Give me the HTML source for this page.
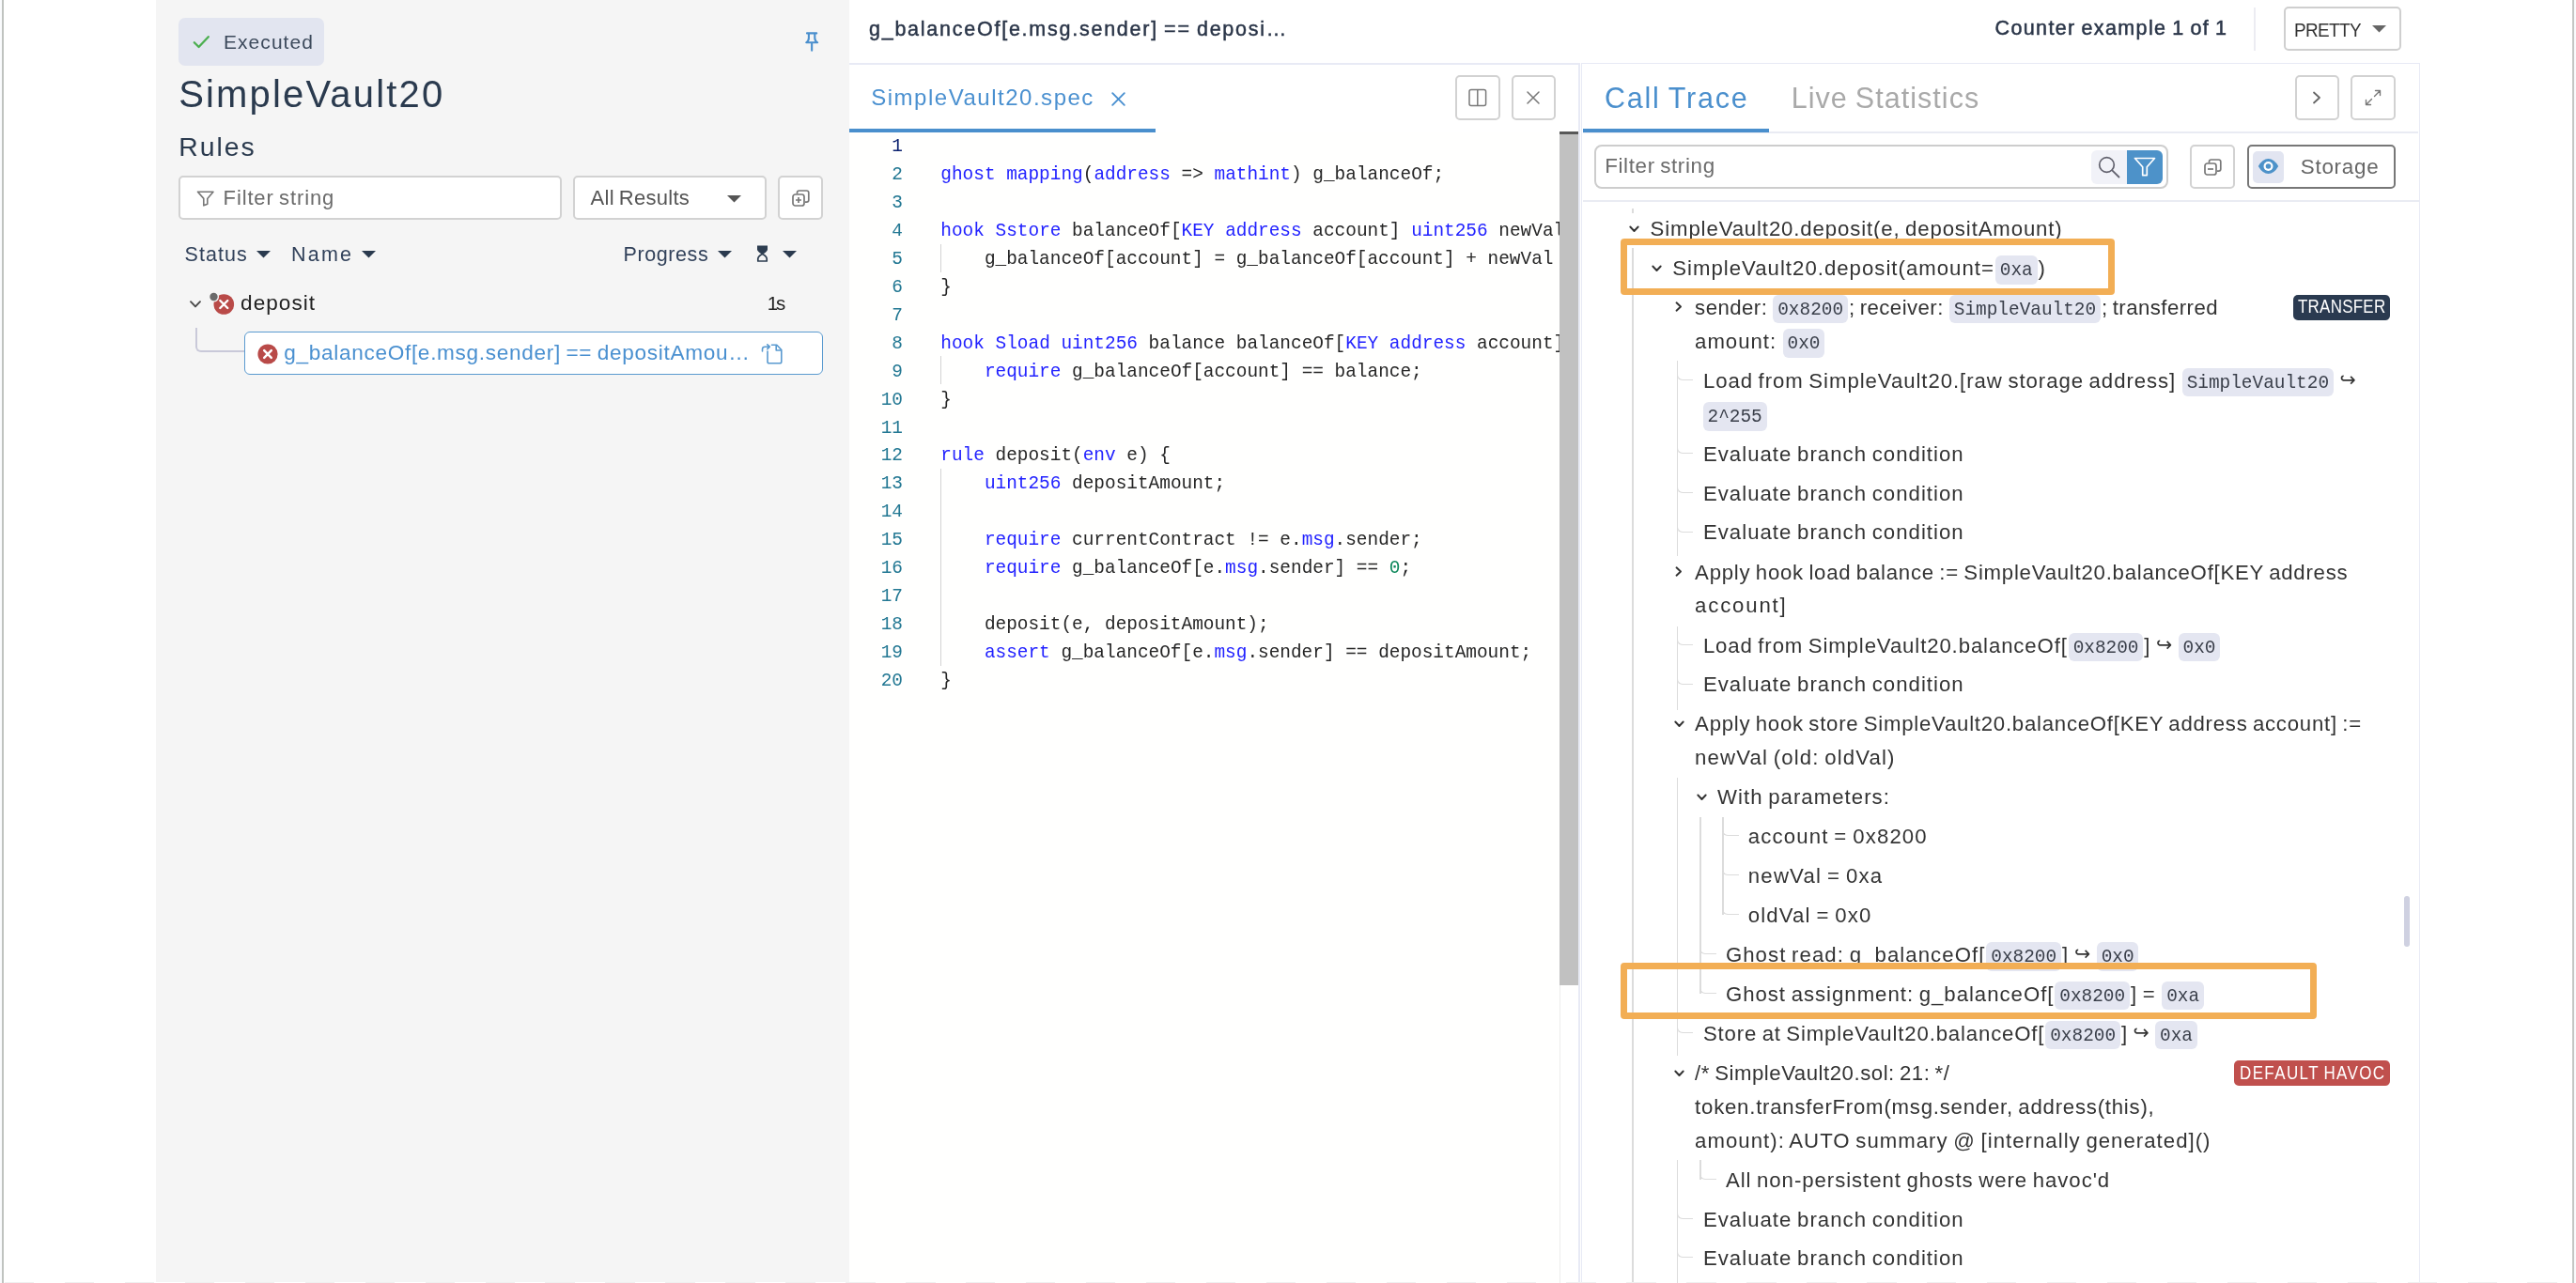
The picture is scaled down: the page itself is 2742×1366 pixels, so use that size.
<!DOCTYPE html>
<html lang="en"><head><meta charset="utf-8"><title>SimpleVault20 - Rules</title>
<style>

html,body{margin:0;padding:0;background:#fff;}
body{width:2742px;height:1366px;position:relative;overflow:hidden;will-change:transform;font-family:"Liberation Sans",sans-serif;color:#2a3a4e;word-spacing:-1.5px;}
.t{position:absolute;white-space:nowrap;}
.a{position:absolute;}
.b{position:absolute;box-sizing:border-box;}
svg{position:absolute;overflow:visible;}
.btn{position:absolute;box-sizing:border-box;border:2px solid #cfcfcf;border-radius:5px;background:#fff;}
.c{font-family:"Liberation Mono",monospace;font-size:19.41px;letter-spacing:0;background:#e4e6f1;color:#3a3f4a;border-radius:6px;padding:5px 4.85px 3.6px 4.85px;margin:0 1px;word-spacing:0;}
.row{position:absolute;white-space:nowrap;font-size:22.2px;line-height:30px;color:#333;}
.row .ar{font-family:"DejaVu Sans",sans-serif;font-size:20.5px;letter-spacing:0;position:relative;top:-2px;}
.gl{position:absolute;background:#dcdcdc;}
.tk{position:absolute;box-sizing:border-box;border-left:1.6px solid #dcdcdc;border-bottom:1.6px solid #dcdcdc;border-bottom-left-radius:6px;}
.code{position:absolute;white-space:pre;word-spacing:0;font-family:"Liberation Mono",monospace;font-size:19.41px;line-height:30px;color:#262626;left:1001.3px;}
.ln{position:absolute;white-space:pre;font-family:"Liberation Mono",monospace;font-size:19.41px;line-height:30px;color:#237893;text-align:right;left:900px;width:61px;}
.k{color:#2222ff;}
.n{color:#098658;}
.ob{position:absolute;box-sizing:border-box;border:7.2px solid #f2ae55;border-radius:4px;z-index:5;}

</style></head>
<body>
<div class="a" style="left:0;top:0;width:2px;height:1366px;background:#fafbfd"></div>
<div class="a" style="left:2px;top:0;width:2px;height:1366px;background:#c0c3c0"></div>
<div class="a" style="left:2738px;top:0;width:2.1px;height:1366px;background:#c4c6c4"></div>
<div class="a" style="left:2740.1px;top:0;width:1.9px;height:1366px;background:#fafbfd"></div>
<div class="a" id="leftpanel" style="left:166px;top:0;width:738px;height:1365px;background:#f5f5f5"></div>
<div class="a" style="left:190px;top:19px;width:155px;height:50.5px;background:#e2e5f0;border-radius:7px"></div>
<svg style="left:205px;top:37px" width="19" height="15" viewBox="0 0 19 15"><path d="M1.8 8.2 L6.6 13 L16.8 2.2" fill="none" stroke="#4caf50" stroke-width="2.3" stroke-linecap="round" stroke-linejoin="round"></path></svg>
<span class="t" style="top: 30.9px; font-size: 21px; line-height: 27px; color: rgb(61, 74, 92); font-weight: 400; left: 238px; letter-spacing: 1.05px;">Executed</span>
<svg style="left:856px;top:33px" width="16" height="22" viewBox="0 0 16 22"><path d="M3 2.4 H13.2 M4.9 2.6 V7.6 Q4.9 10.6 2.2 12.3 H14.2 Q11.3 10.6 11.3 7.6 V2.6 M8.15 12.5 V20.7" fill="none" stroke="#4a8fcd" stroke-width="2.1" stroke-linecap="round" stroke-linejoin="round"></path></svg>
<span class="t" style="top: 74.3px; font-size: 40px; line-height: 52px; color: rgb(42, 58, 78); font-weight: 400; left: 190.2px; letter-spacing: 2.17px;">SimpleVault20</span>
<span class="t" style="top: 138.4px; font-size: 28.4px; line-height: 37px; color: rgb(42, 58, 78); font-weight: 400; left: 190.3px; letter-spacing: 1.96px;">Rules</span>
<div class="btn" style="left:190.2px;top:186.6px;width:407.8px;height:47.6px;border-color:#d2d2d2;border-width:2px"></div>
<svg style="left:209px;top:203px" width="20" height="17" viewBox="0 0 20 17"><path d="M1.5 1.2 H18 L11.8 8.4 V14.2 L7.8 15.8 V8.4 Z" fill="none" stroke="#777" stroke-width="1.6" stroke-linejoin="round"></path></svg>
<span class="t" style="top: 195.5px; font-size: 22px; line-height: 29px; color: rgb(107, 107, 107); font-weight: 400; left: 237.6px; letter-spacing: 0.86px;">Filter string</span>
<div class="btn" style="left:610.3px;top:186.6px;width:206px;height:47.6px;border-color:#d2d2d2;border-width:2px"></div>
<span class="t" style="top: 195.5px; font-size: 22px; line-height: 29px; color: rgb(85, 85, 85); font-weight: 400; left: 628.5px; letter-spacing: 0.29px;">All Results</span>
<svg style="left:773.5px;top:207.5px" width="15" height="8" viewBox="0 0 15 8"><path d="M0 0 H15 L7.5 7.5 Z" fill="#555"></path></svg>
<div class="btn" style="left:828.3px;top:186.6px;width:48px;height:47.6px;border-color:#d2d2d2;border-width:2px"></div>
<svg style="left:843px;top:202px" width="19" height="18" viewBox="0 0 19 18"><rect x="1" y="5" width="12" height="12" rx="2.5" fill="none" stroke="#777" stroke-width="1.7"></rect><path d="M5.5 4.5 V3.2 Q5.5 1 7.7 1 H15.5 Q17.8 1 17.8 3.2 V11 Q17.8 13.2 15.5 13.2 H14" fill="none" stroke="#777" stroke-width="1.7"></path><path d="M7 8 V14 M4 11 H10" stroke="#777" stroke-width="1.7"></path></svg>
<span class="t" style="top: 256.6px; font-size: 21.5px; line-height: 28px; color: rgb(49, 65, 90); font-weight: 400; left: 196.5px; letter-spacing: 1.08px;">Status</span>
<svg style="left:273px;top:267.2px" width="15" height="8" viewBox="0 0 15 8"><path d="M0 0 H15 L7.5 7.5 Z" fill="#2a3a4e"></path></svg>
<span class="t" style="top: 256.6px; font-size: 21.5px; line-height: 28px; color: rgb(49, 65, 90); font-weight: 400; left: 310px; letter-spacing: 2.23px;">Name</span>
<svg style="left:384.5px;top:267.2px" width="15" height="8" viewBox="0 0 15 8"><path d="M0 0 H15 L7.5 7.5 Z" fill="#2a3a4e"></path></svg>
<span class="t" style="top: 256.6px; font-size: 21.5px; line-height: 28px; color: rgb(49, 65, 90); font-weight: 400; left: 663.5px; letter-spacing: 0.59px;">Progress</span>
<svg style="left:764px;top:267.2px" width="15" height="8" viewBox="0 0 15 8"><path d="M0 0 H15 L7.5 7.5 Z" fill="#2a3a4e"></path></svg>
<svg style="left:805px;top:262px" width="13" height="17" viewBox="0 0 13 17"><path d="M1 -0.6 H12 V3.4 Q12 6 6.5 8.6 Q1 6 1 3.4 Z" fill="#2d3d50"></path><path d="M6.5 8.4 Q11.2 10.8 11.2 13.4 V16 H1.8 V13.4 Q1.8 10.8 6.5 8.4 Z" fill="none" stroke="#2d3d50" stroke-width="1.7" stroke-linejoin="round"></path></svg>
<svg style="left:832.5px;top:267.2px" width="15" height="8" viewBox="0 0 15 8"><path d="M0 0 H15 L7.5 7.5 Z" fill="#2a3a4e"></path></svg>
<svg style="left:202.3px;top:320px" width="12" height="8" viewBox="0 0 12 8"><path d="M1 1.2 L6 6.4 L11 1.2" fill="none" stroke="#4a4a4a" stroke-width="1.9" stroke-linecap="round" stroke-linejoin="round"></path></svg>
<svg style="left:222px;top:310px" width="28" height="26" viewBox="0 0 28 26"><circle cx="16.3" cy="14" r="10.8" fill="#b94a48"></circle><path d="M12.3 10 L20.3 18 M20.3 10 L12.3 18" stroke="#fff" stroke-width="2.4" stroke-linecap="round"></path><circle cx="5.5" cy="6" r="5.6" fill="#f5f5f5"></circle><circle cx="5.5" cy="6" r="4.2" fill="#6a6a6a"></circle></svg>
<span class="t" style="top: 308.3px; font-size: 22.6px; line-height: 29px; color: rgb(34, 34, 34); font-weight: 400; left: 256.1px; letter-spacing: 1.02px;">deposit</span>
<span class="t" style="left:816.8px;top:309.2px;font-size:20.5px;line-height:27px;color:#222;font-weight:400;letter-spacing:-2.2px;">1s</span>
<div class="b" style="left:208px;top:348.5px;width:54px;height:26.5px;border-left:2px solid #c9c9d9;border-bottom:2px solid #c9c9d9;border-bottom-left-radius:6px"></div>
<div class="b" style="left:260.3px;top:352.9px;width:615.7px;height:45.8px;border:1.8px solid #5b9bd0;border-radius:6px;background:#fff"></div>
<svg style="left:274px;top:366px" width="22" height="22" viewBox="0 0 22 22"><circle cx="11" cy="11" r="10.6" fill="#b94a48"></circle><path d="M7.2 7.2 L14.8 14.8 M14.8 7.2 L7.2 14.8" stroke="#fff" stroke-width="2.5" stroke-linecap="round"></path></svg>
<span class="t" style="top: 360.9px; font-size: 22.6px; line-height: 29px; color: rgb(74, 144, 208); font-weight: 400; left: 302.2px; letter-spacing: 0.69px;">g_balanceOf[e.msg.sender] == depositAmou…</span>
<svg style="left:810px;top:365px" width="24" height="24" viewBox="0 0 24 24"><path d="M7 9 V20 Q7 21.8 8.8 21.8 H20 Q21.8 21.8 21.8 20 V7.5 L16.8 2.2 H11.5" fill="none" stroke="#5a9ad0" stroke-width="1.6" stroke-linejoin="round" stroke-linecap="round"></path><path d="M16.2 2.5 V8 H21.5" fill="none" stroke="#5a9ad0" stroke-width="1.6" stroke-linejoin="round"></path><path d="M1.5 9 V6.8 Q1.5 4.2 4.2 4.2 H9 M6.8 1.8 L9.3 4.2 L6.8 6.6" fill="none" stroke="#5a9ad0" stroke-width="1.6" stroke-linejoin="round" stroke-linecap="round"></path></svg>
<span class="t" style="top: 17px; font-size: 21.5px; line-height: 28px; color: rgb(42, 53, 72); font-weight: 400; -webkit-text-stroke: 0.45px rgb(42, 53, 72); left: 925px; letter-spacing: 1.75px;">g_balanceOf[e.msg.sender] == deposi…</span>
<span class="t" style="top: 15.5px; font-size: 21.5px; line-height: 28px; color: rgb(42, 53, 72); font-weight: 400; -webkit-text-stroke: 0.5px rgb(42, 53, 72); left: 2123.5px; letter-spacing: 1.38px;">Counter example 1 of 1</span>
<div class="a" style="left:2399px;top:8px;width:2px;height:46px;background:#ececf2"></div>
<div class="btn" style="left:2430.8px;top:7.3px;width:125.4px;height:47px;border-color:#cfcfcf"></div>
<span class="t" style="top: 18.2px; font-size: 21px; line-height: 27px; color: rgb(51, 51, 51); font-weight: 400; transform: scaleX(0.9); transform-origin: 0px 0px; left: 2442.2px; letter-spacing: -0.67px;">PRETTY</span>
<svg style="left:2525px;top:26.5px" width="15" height="8" viewBox="0 0 15 8"><path d="M0 0 H15 L7.5 7.5 Z" fill="#666"></path></svg>
<div class="a" style="left:904px;top:67px;width:777.6px;height:1.7px;background:#e8eaf5"></div>
<div class="a" style="left:1680.1px;top:67px;width:1.5px;height:1300px;background:#e8eaf5"></div>
<span class="t" style="top: 88.4px; font-size: 24px; line-height: 31px; color: rgb(74, 144, 208); font-weight: 400; left: 927.2px; letter-spacing: 1.52px;">SimpleVault20.spec</span>
<svg style="left:1183px;top:97.5px" width="15" height="15" viewBox="0 0 15 15"><path d="M1.2 1.2 L13.8 13.8 M13.8 1.2 L1.2 13.8" stroke="#4a90d0" stroke-width="1.9" stroke-linecap="round"></path></svg>
<div class="a" style="left:904px;top:137.1px;width:326px;height:3.5px;background:#4a8fcd;z-index:3"></div>
<div class="btn" style="left:1549px;top:80.3px;width:47.5px;height:47.8px;border-color:#d2d2d2"></div>
<svg style="left:1563px;top:95px" width="20" height="18" viewBox="0 0 20 18"><rect x="1" y="0.6" width="17.6" height="16.8" rx="2" fill="none" stroke="#7a7a7a" stroke-width="1.5"></rect><path d="M9.8 0.6 V17.4" stroke="#7a7a7a" stroke-width="1.5"></path></svg>
<div class="btn" style="left:1608.5px;top:80.3px;width:47.5px;height:47.8px;border-color:#d2d2d2"></div>
<svg style="left:1625px;top:97px" width="14" height="14" viewBox="0 0 14 14"><path d="M1 1 L13 13 M13 1 L1 13" stroke="#777" stroke-width="1.5" stroke-linecap="round"></path></svg>
<div class="b" style="left:1000.8px;top:140.5px;width:660px;height:29px;border:2.2px solid #eeeeee;border-right:0"></div>
<div class="a" style="left:1659.5px;top:140.3px;width:1px;height:1230px;background:#ececec"></div>
<div class="a" style="left:1659.5px;top:140.3px;width:20.8px;height:908.6px;background:#c1c1c1"></div>
<div class="a" style="left:1659.5px;top:140.3px;width:20.8px;height:3px;background:#585858"></div>
<div class="a" id="codeclip" style="left:900px;top:141px;width:759.5px;height:1225px;overflow:hidden"><div class="a" style="left:4px;top:0;width:756px;height:1225px;background:#fffffe"></div>
<div class="ln" style="left:0;top:0.2px;color:#0b216f">1</div>
<div class="ln" style="left:0;top:30.1px;color:#237893">2</div>
<div class="code" style="left:101.3px;top:30.1px"><span class="k">ghost</span> <span class="k">mapping</span>(<span class="k">address</span> =&gt; <span class="k">mathint</span>) g_balanceOf;</div>
<div class="ln" style="left:0;top:60.1px;color:#237893">3</div>
<div class="ln" style="left:0;top:90.0px;color:#237893">4</div>
<div class="code" style="left:101.3px;top:90.0px"><span class="k">hook</span> <span class="k">Sstore</span> balanceOf[<span class="k">KEY</span> <span class="k">address</span> account] <span class="k">uint256</span> newVal</div>
<div class="ln" style="left:0;top:119.9px;color:#237893">5</div>
<div class="code" style="left:101.3px;top:119.9px">    g_balanceOf[account] = g_balanceOf[account] + newVal</div>
<div class="ln" style="left:0;top:149.9px;color:#237893">6</div>
<div class="code" style="left:101.3px;top:149.9px">}</div>
<div class="ln" style="left:0;top:179.8px;color:#237893">7</div>
<div class="ln" style="left:0;top:209.7px;color:#237893">8</div>
<div class="code" style="left:101.3px;top:209.7px"><span class="k">hook</span> <span class="k">Sload</span> <span class="k">uint256</span> balance balanceOf[<span class="k">KEY</span> <span class="k">address</span> account]</div>
<div class="ln" style="left:0;top:239.6px;color:#237893">9</div>
<div class="code" style="left:101.3px;top:239.6px">    <span class="k">require</span> g_balanceOf[account] == balance;</div>
<div class="ln" style="left:0;top:269.6px;color:#237893">10</div>
<div class="code" style="left:101.3px;top:269.6px">}</div>
<div class="ln" style="left:0;top:299.5px;color:#237893">11</div>
<div class="ln" style="left:0;top:329.4px;color:#237893">12</div>
<div class="code" style="left:101.3px;top:329.4px"><span class="k">rule</span> deposit(<span class="k">env</span> e) {</div>
<div class="ln" style="left:0;top:359.4px;color:#237893">13</div>
<div class="code" style="left:101.3px;top:359.4px">    <span class="k">uint256</span> depositAmount;</div>
<div class="ln" style="left:0;top:389.3px;color:#237893">14</div>
<div class="ln" style="left:0;top:419.2px;color:#237893">15</div>
<div class="code" style="left:101.3px;top:419.2px">    <span class="k">require</span> currentContract != e.<span class="k">msg</span>.sender;</div>
<div class="ln" style="left:0;top:449.1px;color:#237893">16</div>
<div class="code" style="left:101.3px;top:449.1px">    <span class="k">require</span> g_balanceOf[e.<span class="k">msg</span>.sender] == <span class="n">0</span>;</div>
<div class="ln" style="left:0;top:479.1px;color:#237893">17</div>
<div class="ln" style="left:0;top:509.0px;color:#237893">18</div>
<div class="code" style="left:101.3px;top:509.0px">    deposit(e, depositAmount);</div>
<div class="ln" style="left:0;top:538.9px;color:#237893">19</div>
<div class="code" style="left:101.3px;top:538.9px">    <span class="k">assert</span> g_balanceOf[e.<span class="k">msg</span>.sender] == depositAmount;</div>
<div class="ln" style="left:0;top:568.9px;color:#237893">20</div>
<div class="code" style="left:101.3px;top:568.9px">}</div>
<div class="a" style="left:100.9px;top:118.7px;width:1.2px;height:30.0px;background:#d3d3d3"></div>
<div class="a" style="left:100.9px;top:238.4px;width:1.2px;height:30.0px;background:#d3d3d3"></div>
<div class="a" style="left:100.9px;top:358.2px;width:1.2px;height:209.6px;background:#d3d3d3"></div>
</div>
<div class="b" style="left:1683.4px;top:67px;width:893px;height:1310px;border:1.7px solid #e8eaf5;"></div>
<span class="t" style="top: 84px; font-size: 30.5px; line-height: 40px; color: rgb(74, 143, 205); font-weight: 400; left: 1707.9px; letter-spacing: 1.79px;">Call Trace</span>
<span class="t" style="top: 84px; font-size: 30.5px; line-height: 40px; color: rgb(169, 169, 169); font-weight: 400; left: 1906.7px; letter-spacing: 1.04px;">Live Statistics</span>
<div class="a" style="left:1685px;top:140px;width:889px;height:2px;background:#e9ebf3"></div>
<div class="a" style="left:1685px;top:137.1px;width:198px;height:3.5px;background:#4a8fcd"></div>
<div class="btn" style="left:2442.6px;top:80.3px;width:47.4px;height:47.8px;border-color:#d2d2d2"></div>
<svg style="left:2461px;top:97px" width="10" height="14" viewBox="0 0 10 14"><path d="M2 1.5 L8 7 L2 12.5" fill="none" stroke="#666" stroke-width="1.8" stroke-linecap="round" stroke-linejoin="round"></path></svg>
<div class="btn" style="left:2502.4px;top:80.3px;width:47.4px;height:47.8px;border-color:#d2d2d2"></div>
<svg style="left:2517px;top:95px" width="18" height="18" viewBox="0 0 18 18"><path d="M10.5 7.5 L16.5 1.5 M11.5 1.5 H16.5 V6.5 M7.5 10.5 L1.5 16.5 M1.5 11.5 V16.5 H6.5" fill="none" stroke="#777" stroke-width="1.4" stroke-linecap="round" stroke-linejoin="round"></path></svg>
<div class="btn" style="left:1696.8px;top:153.6px;width:610.8px;height:47.8px;border-color:#cdcdcd;border-radius:8px"></div>
<span class="t" style="top: 162.2px; font-size: 22.4px; line-height: 29px; color: rgb(107, 107, 107); font-weight: 400; left: 1708.2px; letter-spacing: 0.64px;">Filter string</span>
<div class="a" style="left:2226px;top:159.5px;width:38px;height:36.5px;background:#f1f2f8;border-radius:6px 0 0 6px"></div>
<svg style="left:2233px;top:166px" width="24" height="24" viewBox="0 0 24 24"><circle cx="9.5" cy="9.5" r="7.8" fill="none" stroke="#62626e" stroke-width="1.7"></circle><path d="M15.3 15.3 L22.5 22.5" stroke="#62626e" stroke-width="1.8" stroke-linecap="round"></path></svg>
<div class="a" style="left:2264px;top:159.5px;width:37.5px;height:36.5px;background:#4d92c9;border-radius:0 6px 6px 0"></div>
<svg style="left:2271px;top:167px" width="24" height="22" viewBox="0 0 24 22"><path d="M1.5 1.5 H22.5 L14.3 10.8 V19.6 H9.7 V10.8 Z" fill="none" stroke="#fff" stroke-width="1.7" stroke-linejoin="round"></path></svg>
<div class="btn" style="left:2331.3px;top:153.6px;width:47.7px;height:47.8px;border-color:#d2d2d2"></div>
<svg style="left:2346px;top:169px" width="19" height="18" viewBox="0 0 19 18"><rect x="1" y="5" width="12" height="12" rx="2.5" fill="none" stroke="#777" stroke-width="1.7"></rect><path d="M5.5 4.5 V3.2 Q5.5 1 7.7 1 H15.5 Q17.8 1 17.8 3.2 V11 Q17.8 13.2 15.5 13.2 H14" fill="none" stroke="#777" stroke-width="1.7"></path><path d="M4 11 H10" stroke="#777" stroke-width="1.7"></path></svg>
<div class="btn" style="left:2391.5px;top:153.6px;width:158.7px;height:47.8px;border-color:#777;border-width:2px;border-radius:5px"></div>
<div class="a" style="left:2398px;top:160.5px;width:33px;height:34.5px;background:#e2e5f1;border-radius:5px"></div>
<svg style="left:2403px;top:168px" width="23" height="18" viewBox="0 0 23 18"><path d="M0.8 9 Q5.5 1 11.5 1 Q17.5 1 22.2 9 Q17.5 17 11.5 17 Q5.5 17 0.8 9 Z" fill="#4d92c9"></path><circle cx="11.5" cy="9" r="5" fill="#fff"></circle><circle cx="11.5" cy="9" r="2.8" fill="#4d92c9"></circle></svg>
<span class="t" style="top: 162.6px; font-size: 22.4px; line-height: 29px; color: rgb(102, 102, 102); font-weight: 400; left: 2448.8px; letter-spacing: 0.74px;">Storage</span>
<div class="a" style="left:1685px;top:212.9px;width:889.6px;height:2px;background:#e9ebf3"></div>
<div class="row" style="left: 1756.6px; top: 229px; letter-spacing: 0.87px;">SimpleVault20.deposit(e, depositAmount)</div>
<svg style="left:1733.5px;top:240.0px" width="11" height="8" viewBox="0 0 11 8"><path d="M1.3 1.5 L5.5 6 L9.7 1.5" fill="none" stroke="#333" stroke-width="1.9" stroke-linecap="round" stroke-linejoin="round"></path></svg>
<div class="row" style="left: 1780.2px; top: 271.3px; letter-spacing: 1.01px;">SimpleVault20.deposit(amount=<span class="c">0xa</span>)</div>
<svg style="left:1757.5px;top:282.3px" width="11" height="8" viewBox="0 0 11 8"><path d="M1.3 1.5 L5.5 6 L9.7 1.5" fill="none" stroke="#333" stroke-width="1.9" stroke-linecap="round" stroke-linejoin="round"></path></svg>
<div class="row" style="left: 1804.1px; top: 312.6px; letter-spacing: 0.45px;">sender: <span class="c">0x8200</span>; receiver: <span class="c">SimpleVault20</span>; transferred</div>
<svg style="left:1782.5px;top:320.8px" width="8" height="11" viewBox="0 0 8 11"><path d="M1.5 1.3 L6 5.5 L1.5 9.7" fill="none" stroke="#333" stroke-width="1.9" stroke-linecap="round" stroke-linejoin="round"></path></svg>
<div class="row" style="left: 1804.1px; top: 349.1px; letter-spacing: 0.97px;">amount: <span class="c">0x0</span></div>
<div class="row" style="left: 1812.9px; top: 390.8px; letter-spacing: 0.94px;">Load from SimpleVault20.[raw storage address] <span class="c">SimpleVault20</span> <span class="ar">↪</span></div>
<div class="row" style="left:1811.7px;top:427.2px"><span class="c">2^255</span></div>
<div class="row" style="left: 1812.9px; top: 469.1px; letter-spacing: 1.02px;">Evaluate branch condition</div>
<div class="row" style="left: 1812.9px; top: 510.7px; letter-spacing: 1.02px;">Evaluate branch condition</div>
<div class="row" style="left: 1812.9px; top: 552.4px; letter-spacing: 1.02px;">Evaluate branch condition</div>
<div class="row" style="left: 1804.1px; top: 594.8px; letter-spacing: 0.76px;">Apply hook load balance := SimpleVault20.balanceOf[KEY address</div>
<svg style="left:1782.5px;top:603.0px" width="8" height="11" viewBox="0 0 8 11"><path d="M1.5 1.3 L6 5.5 L1.5 9.7" fill="none" stroke="#333" stroke-width="1.9" stroke-linecap="round" stroke-linejoin="round"></path></svg>
<div class="row" style="left: 1804.1px; top: 630.4px; letter-spacing: 1.82px;">account]</div>
<div class="row" style="left: 1812.9px; top: 672.8px; letter-spacing: 0.88px;">Load from SimpleVault20.balanceOf[<span class="c">0x8200</span>] <span class="ar">↪</span> <span class="c">0x0</span></div>
<div class="row" style="left: 1812.9px; top: 714.4px; letter-spacing: 1.02px;">Evaluate branch condition</div>
<div class="row" style="left: 1804.1px; top: 756.1px; letter-spacing: 0.75px;">Apply hook store SimpleVault20.balanceOf[KEY address account] :=</div>
<svg style="left:1781.5px;top:767.0999999999999px" width="11" height="8" viewBox="0 0 11 8"><path d="M1.3 1.5 L5.5 6 L9.7 1.5" fill="none" stroke="#333" stroke-width="1.9" stroke-linecap="round" stroke-linejoin="round"></path></svg>
<div class="row" style="left: 1804.1px; top: 792.2px; letter-spacing: 1.12px;">newVal (old: oldVal)</div>
<div class="row" style="left: 1828px; top: 834.2px; letter-spacing: 1.03px;">With parameters:</div>
<svg style="left:1805.5px;top:845.1999999999999px" width="11" height="8" viewBox="0 0 11 8"><path d="M1.3 1.5 L5.5 6 L9.7 1.5" fill="none" stroke="#333" stroke-width="1.9" stroke-linecap="round" stroke-linejoin="round"></path></svg>
<div class="row" style="left: 1860.8px; top: 876.2px; letter-spacing: 1.14px;">account = 0x8200</div>
<div class="row" style="left: 1860.8px; top: 918.2px; letter-spacing: 1.2px;">newVal = 0xa</div>
<div class="row" style="left: 1860.8px; top: 959.8px; letter-spacing: 1.13px;">oldVal = 0x0</div>
<div class="row" style="left: 1836.9px; top: 1002.2px; letter-spacing: 1.06px;">Ghost read: g_balanceOf[<span class="c">0x8200</span>] <span class="ar">↪</span> <span class="c">0x0</span></div>
<div class="row" style="left: 1836.9px; top: 1043.8px; letter-spacing: 0.98px;">Ghost assignment: g_balanceOf[<span class="c">0x8200</span>] = <span class="c">0xa</span></div>
<div class="row" style="left: 1812.9px; top: 1085.8px; letter-spacing: 0.84px;">Store at SimpleVault20.balanceOf[<span class="c">0x8200</span>] <span class="ar">↪</span> <span class="c">0xa</span></div>
<div class="row" style="left: 1804.1px; top: 1127.8px; letter-spacing: 0.53px;">/* SimpleVault20.sol: 21: */</div>
<svg style="left:1781.5px;top:1138.8px" width="11" height="8" viewBox="0 0 11 8"><path d="M1.3 1.5 L5.5 6 L9.7 1.5" fill="none" stroke="#333" stroke-width="1.9" stroke-linecap="round" stroke-linejoin="round"></path></svg>
<div class="row" style="left: 1804.1px; top: 1163.8px; letter-spacing: 0.77px;">token.transferFrom(msg.sender, address(this),</div>
<div class="row" style="left: 1804.1px; top: 1200px; letter-spacing: 1.02px;">amount): AUTO summary @ [internally generated]()</div>
<div class="row" style="left: 1836.9px; top: 1241.6px; letter-spacing: 0.95px;">All non-persistent ghosts were havoc'd</div>
<div class="row" style="left: 1812.9px; top: 1283.6px; letter-spacing: 1.02px;">Evaluate branch condition</div>
<div class="row" style="left: 1812.9px; top: 1325.2px; letter-spacing: 1.02px;">Evaluate branch condition</div>
<div class="gl" style="left:1737.1px;top:221.5px;width:1.6px;height:5.8px"></div>
<div class="gl" style="left:1737.1px;top:264.0px;width:1.6px;height:1102.0px"></div>
<div class="gl" style="left:1784.7px;top:384.0px;width:1.6px;height:208.0px"></div>
<div class="gl" style="left:1784.7px;top:667.0px;width:1.6px;height:89.0px"></div>
<div class="gl" style="left:1784.7px;top:828.0px;width:1.6px;height:296.0px"></div>
<div class="gl" style="left:1784.7px;top:1235.0px;width:1.6px;height:131.0px"></div>
<div class="tk" style="left:1784.7px;top:395.9px;width:17.3px;height:9px"></div>
<div class="tk" style="left:1784.7px;top:474.2px;width:17.3px;height:9px"></div>
<div class="tk" style="left:1784.7px;top:515.8px;width:17.3px;height:9px"></div>
<div class="tk" style="left:1784.7px;top:557.5px;width:17.3px;height:9px"></div>
<div class="tk" style="left:1784.7px;top:677.9px;width:17.3px;height:9px"></div>
<div class="tk" style="left:1784.7px;top:719.5px;width:17.3px;height:9px"></div>
<div class="tk" style="left:1784.7px;top:1090.9px;width:17.3px;height:9px"></div>
<div class="tk" style="left:1784.7px;top:1288.7px;width:17.3px;height:9px"></div>
<div class="tk" style="left:1784.7px;top:1330.3px;width:17.3px;height:9px"></div>
<div class="gl" style="left:1809.0px;top:870.0px;width:1.6px;height:188.0px"></div>
<div class="tk" style="left:1809.0px;top:1007.3px;width:18.0px;height:9px"></div>
<div class="tk" style="left:1809.0px;top:1048.9px;width:18.0px;height:9px"></div>
<div class="gl" style="left:1809.0px;top:1235.0px;width:1.6px;height:20.8px"></div>
<div class="tk" style="left:1809.0px;top:1246.7px;width:18.0px;height:9px"></div>
<div class="gl" style="left:1833.0px;top:870.0px;width:1.6px;height:104.0px"></div>
<div class="tk" style="left:1833.0px;top:881.3px;width:18.0px;height:9px"></div>
<div class="tk" style="left:1833.0px;top:923.3px;width:18.0px;height:9px"></div>
<div class="tk" style="left:1833.0px;top:964.9px;width:18.0px;height:9px"></div>
<div class="a" style="left:2440.5px;top:314px;width:103.5px;height:26.5px;background:#2a3a50;border-radius:5px"></div>
<span class="t" style="top: 314.3px; font-size: 19.3px; line-height: 25px; color: rgb(255, 255, 255); font-weight: 400; transform: scaleX(0.88); transform-origin: 0px 0px; left: 2445.6px; letter-spacing: 0.28px;">TRANSFER</span>
<div class="a" style="left:2378px;top:1129px;width:166px;height:26.5px;background:#c0504d;border-radius:5px"></div>
<span class="t" style="top: 1129.8px; font-size: 19.3px; line-height: 25px; color: rgb(255, 255, 255); font-weight: 400; transform: scaleX(0.88); transform-origin: 0px 0px; left: 2384.3px; letter-spacing: 1.59px;">DEFAULT HAVOC</span>
<div class="ob" style="left:1725px;top:254.4px;width:526px;height:59.4px"></div>
<div class="ob" style="left:1725px;top:1025px;width:741.1px;height:59.8px"></div>
<div class="a" style="left:2559.2px;top:954.2px;width:6px;height:53.8px;background:#cfd1e1;border-radius:3px"></div>
<div class="a" style="left:5px;top:1365.2px;width:2733px;height:0.8px;background:repeating-linear-gradient(90deg,#f0f0f0 0,#f0f0f0 31.4px,transparent 31.4px,transparent 63.94px);z-index:6"></div>

</body></html>
